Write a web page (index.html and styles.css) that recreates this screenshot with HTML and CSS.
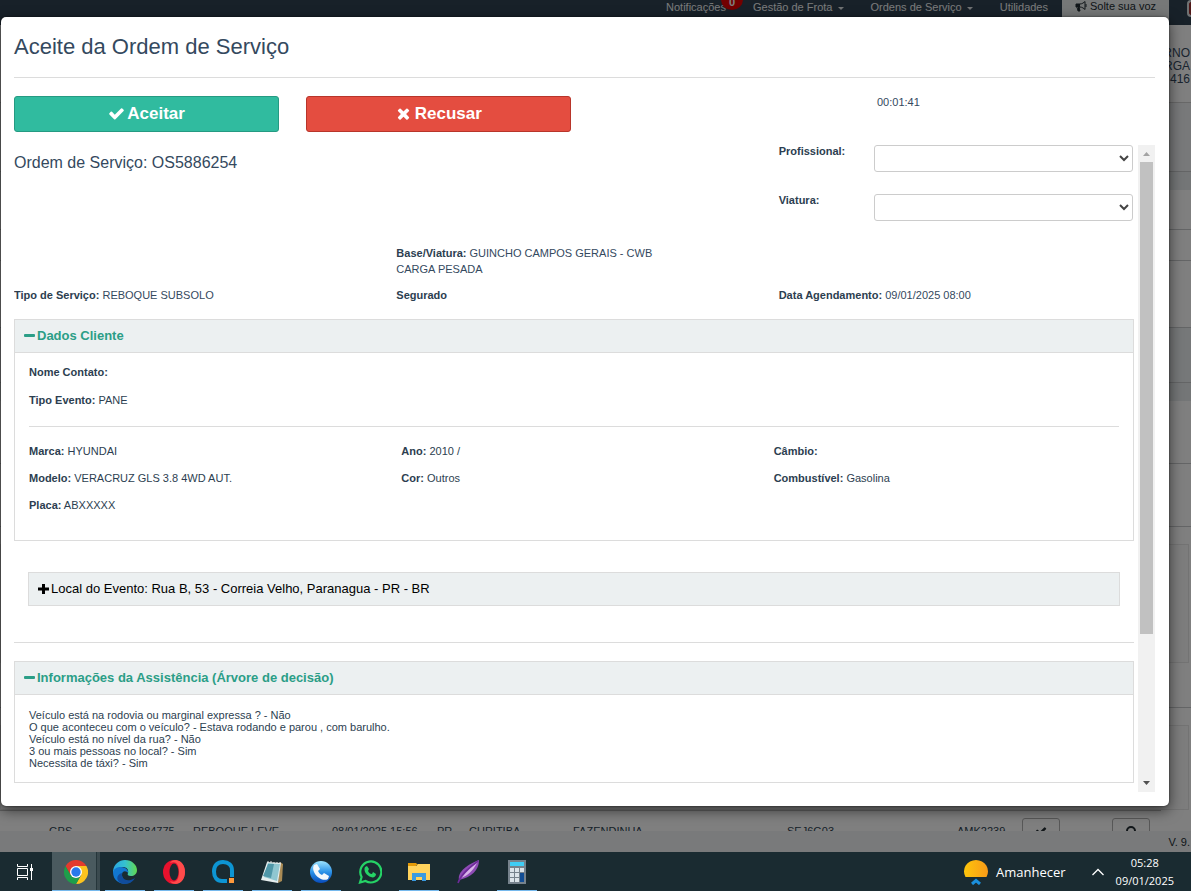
FILE: index.html
```html
<!DOCTYPE html>
<html lang="pt-br">
<head>
    <meta charset="UTF-8">
    <meta name="viewport" content="width=device-width, initial-scale=1.0">
    <title>Aceite da Ordem de Serviço</title>
    <link rel="stylesheet" href="styles.css">
</head>
<body>
    <div class="browser">
        <div class="page">
            <nav class="navbar">
                <a href="#" class="nav_link">Notificações<span class="badge">0</span></a>
                <a href="#" class="nav_link">Gestão de Frota <span class="caret"></span></a>
                <a href="#" class="nav_link">Ordens de Serviço <span class="caret"></span></a>
                <a href="#" class="nav_link">Utilidades</a>
                <a href="#" class="nav_voice">
                    <svg width="12" height="12" viewBox="0 0 12 12"><path d="M1 4h4c2 0 4-1.500 5-2.500v8C9 8.500 7 7 5 7H4l1 4H3L2 7H1z" fill="none" stroke="#222d32"/><path d="M1 4h4v3H1zM3 7h1l1 4H3z" fill="#222d32"/><path d="M11 4v3" stroke="#222d32"/></svg>
                    Solte sua voz
                </a>
                <span class="nav_flag"></span>
            </nav>
            <header class="page_header">RNO<br>RGA<br>416</header>
            <div class="band band_title"></div>
            <div class="band band_gap"></div>
            <div class="band band_tabs"></div>
            <div class="band band_row"></div>
            <div class="band band_filter"></div>
            <div class="band band_title2"></div>
            <div class="band band_gap"></div>
            <div class="band band_tall"></div>
            <div class="band band_tall"></div>
            <div class="card"></div>
            <div class="band band_foot"></div>
            <div class="card card_last"></div>
            <div class="orders">
                <table>
                    <colgroup>
                        <col class="c_type"><col class="c_order"><col class="c_service"><col class="c_date"><col class="c_state"><col class="c_city"><col class="c_area"><col class="c_plate"><col class="c_plate2"><col class="c_act"><col>
                    </colgroup>
                    <tr>
                        <td>GPS</td>
                        <td>OS5884775</td>
                        <td>REBOQUE LEVE</td>
                        <td>08/01/2025 15:56</td>
                        <td>PR</td>
                        <td>CURITIBA</td>
                        <td>FAZENDINHA</td>
                        <td>SEJ6G03</td>
                        <td>AMK2239</td>
                        <td class="action"><button type="button" class="row_btn" aria-label="Confirmar"><svg class="fa" viewBox="0 0 1792 1792"><path d="M1671 566q0 40-28 68l-724 724-136 136q-28 28-68 28t-68-28l-136-136-362-362q-28-28-28-68t28-68l136-136q28-28 68-28t68 28l294 295 656-657q28-28 68-28t68 28l136 136q28 28 28 68z"/></svg></button></td>
                        <td class="action"><button type="button" class="row_btn" aria-label="Buscar"><svg class="fa" viewBox="0 0 12 12"><circle cx="6" cy="6" r="4" fill="none" stroke="#222d32" stroke-width="2"/></svg></button></td>
                    </tr>
                </table>
            </div>
            <footer class="page_footer">V. 9.</footer>
        </div>

        <div class="backdrop">
            <div class="modal" role="dialog">
                <h1 class="modal_title">Aceite da Ordem de Serviço</h1>
                <div class="actions">
                    <button type="button" class="btn btn_accept"><svg class="fa fa_btn" viewBox="0 0 1792 1792"><path d="M1671 566q0 40-28 68l-724 724-136 136q-28 28-68 28t-68-28l-136-136-362-362q-28-28-28-68t28-68l136-136q28-28 68-28t68 28l294 295 656-657q28-28 68-28t68 28l136 136q28 28 28 68z"/></svg> Aceitar</button>
                    <button type="button" class="btn btn_refuse"><svg class="fa fa_btn" viewBox="0 0 1792 1792"><path d="M1490 1322q0 40-28 68l-136 136q-28 28-68 28t-68-28l-294-294-294 294q-28 28-68 28t-68-28l-136-136q-28-28-28-68t28-68l294-294-294-294q-28-28-28-68t28-68l136-136q28-28 68-28t68 28l294 294 294-294q28-28 68-28t68 28l136 136q28 28 28 68t-28 68l-294 294 294 294q28 28 28 68z"/></svg> Recusar</button>
                    <div class="timer">00:01:41</div>
                </div>
                <div class="scroll">
                    <div class="content">
                        <div class="cols row_order">
                            <h2 class="order">Ordem de Serviço: OS5886254</h2>
                            <div class="fields">
                                <div class="field">
                                    <label for="profissional">Profissional:</label>
                                    <span class="select_box"><select id="profissional"></select></span>
                                </div>
                                <div class="field">
                                    <label for="viatura">Viatura:</label>
                                    <span class="select_box"><select id="viatura"></select></span>
                                </div>
                            </div>
                        </div>
                        <div class="cols row_base">
                            <p class="base"><b>Base/Viatura:</b> GUINCHO CAMPOS GERAIS - CWB CARGA PESADA</p>
                        </div>
                        <div class="cols row_type">
                            <p><b>Tipo de Serviço:</b> REBOQUE SUBSOLO</p>
                            <p><b>Segurado</b></p>
                            <p><b>Data Agendamento:</b> 09/01/2025 08:00</p>
                        </div>

                        <section class="panel">
                            <h3 class="panel_head"><svg class="sign" viewBox="0 0 11 11"><rect y="3" width="11" height="3" rx="1"/></svg>Dados Cliente</h3>
                            <div class="panel_body client">
                                <p><b>Nome Contato:</b></p>
                                <p><b>Tipo Evento:</b> PANE</p>
                                <hr>
                                <div class="cols car">
                                    <p><b>Marca:</b> HYUNDAI</p>
                                    <p><b>Ano:</b> 2010 /</p>
                                    <p><b>Câmbio:</b></p>
                                    <p><b>Modelo:</b> VERACRUZ GLS 3.8 4WD AUT.</p>
                                    <p><b>Cor:</b> Outros</p>
                                    <p><b>Combustível:</b> Gasolina</p>
                                    <p><b>Placa:</b> ABXXXXX</p>
                                </div>
                            </div>
                        </section>

                        <section class="panel place">
                            <h3 class="panel_head"><svg class="sign" viewBox="0 0 11 11"><path d="M0 3.500h4V0h3v3.500h4v3H7V10H4V6.500H0z"/></svg>Local do Evento: Rua B, 53 - Correia Velho, Paranagua - PR - BR</h3>
                        </section>

                        <hr class="divider">

                        <section class="panel">
                            <h3 class="panel_head"><svg class="sign" viewBox="0 0 11 11"><rect y="3" width="11" height="3" rx="1"/></svg>Informações da Assistência (Árvore de decisão)</h3>
                            <div class="panel_body tree">
                                Veículo está na rodovia ou marginal expressa ? - Não<br>
                                O que aconteceu com o veículo? - Estava rodando e parou , com barulho.<br>
                                Veículo está no nível da rua? - Não<br>
                                3 ou mais pessoas no local? - Sim<br>
                                Necessita de táxi? - Sim
                            </div>
                        </section>
                    </div>
                    <div class="scrollbar">
                        <svg class="arrow" viewBox="0 0 17 17"><path d="M5 11l3.500-4 3.500 4z" fill="#a3a3a3"/></svg>
                        <div class="track"><div class="thumb"></div></div>
                        <svg class="arrow" viewBox="0 0 17 17"><path d="M5 6l3.500 4L12 6z" fill="#505050"/></svg>
                    </div>
                </div>
            </div>
        </div>
    </div>

    <div class="taskbar">
        <div class="apps">
            <button type="button" class="view" aria-label="Visão de tarefas">
                <svg width="16" height="16" viewBox="0 0 16 16" fill="none" stroke="#fff"><path d="M.5 0v2.500h10V0M.5 16v-2.500h10V16M.5 4.500h10v7H.5zM14.500 0v16"/><path d="M13 4h3v3h-3z" fill="#fff" stroke="none"/></svg>
            </button>
            <button type="button" class="app active" aria-label="Chrome">
                <svg viewBox="0 0 24 24"><path d="M12 6h10.400A12 12 0 0 1 12 24l5.200-9z" fill="#fcc31e"/><path d="M1.600 6l5.200 9A6 6 0 0 0 17.200 15L12 24A12 12 0 0 1 1.600 6z" fill="#1e9e4a"/><path d="M12 6H22.400A12 12 0 0 0 1.600 6l5.200 9z" fill="#e33b2e"/><circle cx="12" cy="12" r="6" fill="#fff"/><circle cx="12" cy="12" r="4.700" fill="#2878ea"/></svg>
            </button>
            <button type="button" class="app open" aria-label="Edge">
                <svg viewBox="0 0 24 24"><defs><linearGradient id="edge_top" x1="0" x2="1"><stop offset="0" stop-color="#2aa5e0"/><stop offset=".5" stop-color="#35c1d0"/><stop offset="1" stop-color="#62d94e"/></linearGradient></defs><path d="M0 11C1 4 6 0 12 0c7 0 12 5 12 10 0 4-3 6-6 6-3 0-4-1-3-3 1-4-2-6-5-6-5 0-9 3-10 7z" fill="url(#edge_top)"/><path d="M0 12c1-4 5-5 8-5 5 0 8 4 7 6-1-2-6-3-6 2 0 4 4 8 9 7-7 4-18 1-18-10z" fill="#1277d0"/><path d="M9 13c-1 6 5 10 13 5-4 7-12 7-16 4-3-3-2-8 3-9z" fill="#104c9c"/></svg>
            </button>
            <button type="button" class="app open" aria-label="Opera">
                <svg viewBox="0 0 24 24"><ellipse cx="12" cy="12" rx="11" ry="12" fill="#e8112d"/><path d="M14 0c12 1 12 23 0 24-3 0-5-1-6-3 7 3 9-3 9-9S15 0 8 3c1-2 3-3 6-3z" fill="#ff4b4b"/><ellipse cx="12" cy="12" rx="4.500" ry="8.500" fill="#1a2b31"/></svg>
            </button>
            <button type="button" class="app open" aria-label="Autem">
                <svg viewBox="0 0 24 24"><path d="M21 17V10.500C21 5 17.500 2 12 2S3 5.500 3 11.500 6 21 11 21h5" fill="none" stroke="#0d95d3" stroke-width="4"/><path d="M18 18h5v5h-5z" fill="#ff9a3c"/></svg>
            </button>
            <button type="button" class="app open" aria-label="Bloco de notas">
                <svg viewBox="0 0 24 24"><path d="M20 2l3 2-1 17-4 2z" fill="#a98b55"/><path d="M7 2l14 1-3 20-17-3z" fill="#e6eeee"/><path d="M8 3l12 1-3 17-13-4z" fill="#8fc6d0"/><path d="M8 4l6 0-3 14-8-2z" fill="#4f97a8"/><path d="M8 1v2m3-2v2m3-1v2m3-2v2m3-2v2" stroke="#dfe4e4"/></svg>
            </button>
            <button type="button" class="app open" aria-label="Telefone">
                <svg viewBox="0 0 24 24"><defs><linearGradient id="phone" x2="0" y2="1"><stop offset="0" stop-color="#9de4ff"/><stop offset=".5" stop-color="#2b92e8"/><stop offset="1" stop-color="#084bbb"/></linearGradient></defs><circle cx="12" cy="12" r="11" fill="url(#phone)"/><path d="M5 5l3-1 3 5-2 2c1 2 2 3 4 4l2-2 5 3-1 3c-7 4-18-7-14-14z" fill="#f3f7fb"/></svg>
            </button>
            <button type="button" class="app" aria-label="WhatsApp">
                <svg viewBox="0 0 24 24"><path d="M2 22.500l1.600-5.500A10.500 10.500 0 1 1 7.500 21z" fill="none" stroke="#25d366" stroke-width="2.200"/><path d="M7 7l2-1 2 3-1 2c1 2 2 3 4 3l1-2 3 2c0 3-3 4-5 3-4-1-8-6-6-10z" fill="#25d366"/></svg>
            </button>
            <button type="button" class="app open" aria-label="Explorador de arquivos">
                <svg viewBox="0 0 24 24"><path d="M1 3h8l2 2h-2v3H1z" fill="#e39a08"/><path d="M1 6h8l2-2h12v16H1z" fill="#ffd35c"/><path d="M5 13h14v8h-4v-4H9v4H5z" fill="#3a9be0"/></svg>
            </button>
            <button type="button" class="app" aria-label="Editor">
                <svg viewBox="0 0 24 24"><path d="M23 0c0 11-8 17-20 20C1 12 12 4 23 0z" fill="#8e4bb5"/><path d="M21 3C17 11 11 16 5 18 10 12 15 7 21 3z" fill="#d7b3e8"/><path d="M22 1C14 7 5 14 2 23" fill="none" stroke="#6d2a99" stroke-width="1.500"/></svg>
            </button>
            <button type="button" class="app open" aria-label="Calculadora">
                <svg viewBox="0 0 24 24"><path d="M3 0h18v24H3z" fill="#76828c"/><path d="M5 2h14v4H5z" fill="#3fcdf5"/><path d="M5 8h4v4H5zM10 8h4v4h-4zM15 8h4v4h-4zM5 13h4v4H5zM10 13h4v4h-4zM5 18h4v4H5zM10 18h4v4h-4z" fill="#dbe3e9"/><path d="M15 13h4v9h-4z" fill="#124d94"/></svg>
            </button>
        </div>
        <div class="tray">
            <svg width="24" height="26" viewBox="0 0 24 26"><defs><linearGradient id="sun"><stop offset="0" stop-color="#fdc50b"/><stop offset="1" stop-color="#f89a18"/></linearGradient></defs><path d="M1.500 18A12 11.500 0 1 1 22.500 18z" fill="url(#sun)"/><path d="M8 25l4-3.500 4 3.500" fill="none" stroke="#1b90dd" stroke-width="3"/></svg>
            <span class="weather">Amanhecer</span>
            <svg class="chevron" width="12" height="8" viewBox="0 0 12 8"><path d="M.5 7L6 1.500 11.500 7" fill="none" stroke="#fff" stroke-width="1.300"/></svg>
            <div class="clock">05:28<br>09/01/2025</div>
        </div>
    </div>
</body>
</html>
```
FILE: styles.css
```css
* {
    box-sizing: border-box;
}
body {
    margin: 0;
    height: 100vh;
    display: flex;
    flex-direction: column;
    overflow: hidden;
    font-family: "Liberation Sans", Arial, sans-serif;
    font-size: 11px;
    line-height: 16px;
    color: #34495e;
}
h1, h2, h3, p {
    margin: 0;
    font-weight: normal;
}
hr {
    border: 0;
    border-top: 1px solid #dcdcdc;
    margin: 0;
}
b {
    color: #2c3e50;
}
button {
    font-family: inherit;
    padding: 0;
    border: 0;
    background: none;
}

/* page behind the dialog */
.browser {
    flex: 1;
    min-height: 0;
    position: relative;
    overflow: hidden;
}
.page {
    height: 100%;
    display: flex;
    flex-direction: column;
    background-color: #fff;
}
.page > * {
    flex: none;
}
.navbar {
    height: 25px;
    display: flex;
    justify-content: flex-end;
    gap: 27px;
    background-color: #304252;
}
.nav_link {
    position: relative;
    height: 14px;
    line-height: 14px;
    color: #f4f6f7;
    text-decoration: none;
    white-space: nowrap;
}
.badge {
    position: absolute;
    right: -17px;
    top: -11px;
    width: 22px;
    height: 21px;
    border-radius: 50%;
    padding-top: 6px;
    text-align: center;
    font-weight: bold;
    background-color: #e60000;
    color: #fff;
}
.caret {
    display: inline-block;
    margin-left: 2px;
    vertical-align: middle;
    border: 3px solid transparent;
    border-top-color: #e0e4e6;
    border-bottom: 0;
}
.nav_voice {
    width: 107px;
    margin-left: -13px;
    display: flex;
    justify-content: center;
    gap: 3px;
    height: 25px;
    line-height: 13px;
    background-color: #ecf0f1;
    color: #222d32;
    text-decoration: none;
}
.nav_flag {
    width: 4px;
    height: 17px;
    margin-left: -9px;
    border: 2px solid #dfe4e6;
    border-right: 0;
    border-radius: 4px 0 0 4px;
    background-color: #a03030;
}
.page_header {
    height: 78px;
    padding: 22px 1px 0 0;
    text-align: right;
    font-size: 12px;
    line-height: 13px;
    border-bottom: 1px solid #d0d0d0;
}
.band {
    border-bottom: 1px solid #c8cbcd;
}
.band_title {
    height: 69px;
    background-color: #f0f2f4;
}
.band_gap {
    height: 18px;
    background-color: #e8edef;
    border-bottom: 0;
}
.band_tabs {
    height: 40px;
}
.band_row {
    height: 31px;
}
.band_filter {
    height: 67px;
}
.band_title2 {
    height: 55px;
    background-color: #ecf0f3;
}
.band_tall {
    height: 63px;
}
.card {
    height: 119px;
    margin: 17px 2px 0 0;
    background-color: #fbfbfb;
    border: 1px solid #e6e6e6;
}
.band_foot {
    height: 45px;
}
.card_last {
    height: 85px;
}
.orders {
    flex: 1;
    min-height: 0;
    overflow: hidden;
    margin-right: 30px;
    border-top: 1px solid #c0c0c0;
}
.orders table {
    width: 100%;
    table-layout: fixed;
    border-collapse: collapse;
    color: #2c3e50;
}
.orders td {
    padding: 12px 0 0;
    vertical-align: top;
    white-space: nowrap;
}
.orders td:first-child {
    padding-left: 49px;
}
.c_type { width: 116px; }
.c_order { width: 77px; }
.c_service { width: 139px; }
.c_date { width: 105px; }
.c_state { width: 32px; }
.c_city { width: 104px; }
.c_area { width: 214px; }
.c_plate { width: 170px; }
.c_plate2 { width: 65px; }
.c_act { width: 90px; }
.orders .action {
    padding-top: 7px;
}
.row_btn {
    width: 38px;
    height: 28px;
    border: 1px solid #b0b0b0;
    border-radius: 3px;
}
.page_footer {
    height: 21px;
    padding: 3px 1px 0 0;
    text-align: right;
    background-color: #f3f4f6;
    color: #222d32;
}

/* dialog */
.backdrop {
    position: absolute;
    inset: 0;
    display: flex;
    padding: 17px 22px 46px 1px;
    background-color: rgba(0, 0, 0, .5);
}
.modal {
    flex: 1;
    min-width: 0;
    display: flex;
    flex-direction: column;
    padding: 0 14px 14px 13px;
    border-radius: 5px;
    background-color: #fff;
    box-shadow: 0 4px 14px rgba(0, 0, 0, .6), 0 0 2px rgba(0, 0, 0, .6);
}
.modal_title {
    padding: 17px 0;
    font-size: 22px;
    line-height: 26px;
    border-bottom: 1px solid #dcdcdc;
}
.actions {
    display: grid;
    grid-template-columns: repeat(4, 1fr);
    column-gap: 27px;
    padding: 18px 0 13px;
}
.btn {
    height: 36px;
    border: 1px solid;
    border-radius: 3px;
    font-size: 17px;
    font-weight: bold;
    color: #fff;
}
.btn_accept {
    background-color: #30bb9f;
    border-color: #259a82;
}
.btn_refuse {
    background-color: #e44d40;
    border-color: #b8352a;
}
.fa {
    width: 12px;
    height: 12px;
    fill: #222d32;
}
.fa_btn {
    width: 17px;
    height: 17px;
    fill: #fff;
    vertical-align: -3px;
    margin-right: -2px;
}
.timer {
    grid-column: 4;
    margin-left: -13px;
    line-height: 12px;
}
.scroll {
    flex: 1;
    min-height: 0;
    display: flex;
    gap: 4px;
}
.content {
    flex: 1;
    min-width: 0;
    overflow: hidden;
}
.cols {
    display: grid;
    grid-template-columns: repeat(3, 1fr);
    column-gap: 27px;
}
.row_order {
    min-height: 100px;
}
.order {
    grid-column: 1 / 3;
    padding-top: 9px;
    font-size: 16px;
    line-height: 18px;
}
.fields {
    display: flex;
    flex-direction: column;
    gap: 22px;
    padding-right: 1px;
}
.field {
    display: flex;
}
.field label {
    flex: none;
    width: 95px;
    line-height: 12px;
    font-weight: bold;
    color: #2c3e50;
}
.select_box {
    flex: 1;
    display: flex;
}
.select_box select {
    flex: 1;
    height: 27px;
    border: 1px solid #ccc;
    border-radius: 3px;
    background-color: #fff;
    color: #444;
}
.row_base {
    padding-bottom: 10px;
}
.base {
    grid-column: 2;
    max-width: 280px;
}
.row_type {
    padding-bottom: 16px;
}
.panel {
    border: 1px solid #dcdcdc;
}
.panel_head {
    height: 33px;
    padding: 0 9px;
    display: flex;
    align-items: center;
    gap: 2px;
    font-size: 13px;
    font-weight: bold;
    color: #2b9e87;
    background-color: #ecf0f1;
    border-bottom: 1px solid #dcdcdc;
}
.sign {
    width: 11px;
    height: 11px;
    fill: currentColor;
}
.panel_body {
    padding: 14px 14px 13px;
}
.client {
    padding: 11px 14px 27px;
    color: #2c3e50;
}
.client > p {
    padding-bottom: 12px;
}
.client hr {
    margin: 6px 0 16px;
}
.car {
    row-gap: 11px;
}
.place {
    margin: 31px 14px 36px;
}
.place .panel_head {
    height: 32px;
    border-bottom: 0;
    font-weight: normal;
    color: #000;
}
.divider {
    margin-bottom: 18px;
}
.tree {
    line-height: 12px;
    color: #2c3e50;
}

/* scrollbar of the dialog body */
.scrollbar {
    flex: none;
    width: 17px;
    display: flex;
    flex-direction: column;
    background-color: #f1f1f1;
}
.arrow {
    flex: none;
    height: 17px;
}
.track {
    flex: 1;
    padding: 0 2px;
}
.thumb {
    height: 77%;
    background-color: #c1c1c1;
}

/* taskbar */
.taskbar {
    flex: none;
    height: 39px;
    display: flex;
    justify-content: space-between;
    background-color: #1a2b31;
    color: #fff;
    font-family: "Open Sans", "Noto Sans", sans-serif;
}
.apps {
    display: flex;
    gap: 9px;
}
.view {
    width: 43px;
    display: flex;
    align-items: center;
    justify-content: center;
    padding-left: 7px;
}
.app {
    width: 40px;
    display: flex;
    align-items: center;
    justify-content: center;
    padding-top: 1px;
}
.app svg {
    width: 24px;
    height: 24px;
}
.open {
    box-shadow: inset 0 -1px #76b9ed;
}
.active {
    width: 48px;
    margin-right: -4px;
    background: linear-gradient(90deg, #4a5a5f 44px, #26363b 44px, #26363b 45px, #3b4a4f 45px);
    box-shadow: inset 0 -1px #76b9ed;
}
.tray {
    display: flex;
    align-items: center;
    padding-right: 17px;
}
.weather {
    margin-left: 8px;
    font-size: 13px;
}
.chevron {
    margin: 0 12px 0 26px;
}
.clock {
    font-size: 11px;
    line-height: 18px;
    text-align: center;
}
```
